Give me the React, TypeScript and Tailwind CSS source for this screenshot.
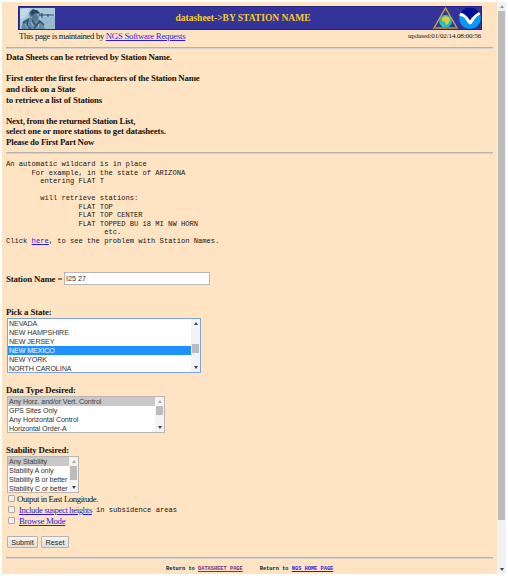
import React from "react";

const SERIF = "font-['Liberation_Serif',serif]";
const SANS = "font-['Liberation_Sans',sans-serif]";
const MONO = "font-['Liberation_Mono',monospace]";
const LINK = "text-[#2a1be8] underline";

function Arrow({ up, color }: { up?: boolean; color: string }) {
  return (
    <svg viewBox="0 0 4 3" className="h-[3px] w-[4px]">
      <path d={up ? "M0 3L2 0L4 3Z" : "M0 0L2 3L4 0Z"} fill={color} />
    </svg>
  );
}

type ListProps = { items: string[]; selected: number; box: string; highlight: string; thumb: string; atTop?: boolean };

function ListBox({ items, selected, box, highlight, thumb, atTop }: ListProps) {
  return (
    <div className={`ml-px flex overflow-hidden border bg-white ${SANS} ${box}`}>
      <div className="min-w-0 flex-1 overflow-hidden">
        {items.map((item, i) => (
          <div
            key={item}
            className={`h-[9px] whitespace-pre pl-px text-[7.15px] leading-[10px] tracking-[-0.1px] ${i === selected ? highlight : "text-[#333]"}`}
          >
            {item}
          </div>
        ))}
      </div>
      <div className="flex w-[9px] shrink-0 flex-col items-center bg-[#f3f3f3]">
        <div className="flex h-[8px] shrink-0 items-center"><Arrow up color={atTop ? "#aaa" : "#444"} /></div>
        <div className={`w-[7px] shrink-0 bg-[#bcbcbc] ${thumb}`} />
        <div className="mt-auto flex h-[9px] shrink-0 items-center"><Arrow color="#444" /></div>
      </div>
    </div>
  );
}

function Portrait() {
  return (
    <svg viewBox="0 0 35 21" className="ml-px h-[21px] w-[35px]">
      <rect width="35" height="21" fill="#a9c9dc" />
      <path d="M0 2L5 0H10L7 7L3 11L0 10Z" fill="#bfdae8" />
      <path d="M21 10L35 8V21H23Z" fill="#96b9d0" />
      <path d="M1 21L3 13L8 10L12 9L19 11L23 16L25 21Z" fill="#6288a4" />
      <path d="M9 5L12 2L17 2L20 5L19 10L15 13L10 11Z" fill="#557994" />
      <path d="M10 4L13 1L18 3L20 6L15 5L12 8Z" fill="#244964" />
      <path d="M16 6L22 5V8L18 9Z" fill="#7da0b7" />
      <path d="M19 7H34M22 5V10M28 6V9" stroke="#2a4e6b" strokeWidth="1.1" />
      <path d="M3 15L8 12L7 18L11 21M12 12L16 18L20 13L24 17M16 18L14 21" fill="none" stroke="#2b4d69" strokeWidth="1.3" />
      <path d="M5 16L8 20M11 14L13 18M19 16L18 20M9 8L12 10" stroke="#9abace" strokeWidth="1" />
    </svg>
  );
}

function NgsLogo() {
  return (
    <svg viewBox="0 0 25 22" className="h-[22px] w-[25px]">
      <circle cx="12.6" cy="14.2" r="6.4" fill="#20b9c0" />
      <path d="M9 11L12 9L16 10L17 13L15 17L13 18L12 15L9 14Z" fill="#e5c934" />
      <path d="M8 16L11 18L10 20" fill="none" stroke="#6bc978" />
      <path d="M12.5 1L1 21H24Z" fill="none" stroke="#d2b13d" strokeWidth="1.3" />
      <path d="M1 21H24" stroke="#8b7359" strokeWidth="1.3" />
    </svg>
  );
}

function NoaaLogo() {
  return (
    <svg viewBox="0 0 22 22" className="ml-px h-[22px] w-[22px]">
      <defs><clipPath id="seal"><circle cx="11" cy="11" r="10.8" /></clipPath></defs>
      <g clipPath="url(#seal)">
        <rect width="22" height="22" fill="#0799f5" />
        <path d="M0 0H22V5L17 8L11 14L5 9L0 6Z" fill="#080e91" />
        <path d="M0 5L5 7Q8 9 11 13.5Q14 8 22 4V7Q17 9 14.5 14Q12.5 17.5 11 17.5Q9 17 7 13Q5 9 0 9Z" fill="white" />
      </g>
    </svg>
  );
}

function Check() {
  return <span className="ml-[2px] mb-[2px] h-[7px] w-[7px] shrink-0 rounded-[1px] border border-[#b0aaa4] bg-[#f0efed]" />;
}

function Rule() {
  return <div className="h-[2px] w-[487px] border-t border-[#b4b0ac] bg-[#d8d2cc]" />;
}

const INTRO = [
  { text: "Data Sheets can be retrieved by Station Name.", tracking: "tracking-[-0.18px]" },
  { text: "", tracking: "" },
  { text: "First enter the first few characters of the Station Name", tracking: "tracking-[-0.21px]" },
  { text: "and click on a State", tracking: "tracking-[-0.2px]" },
  { text: "to retrieve a list of Stations", tracking: "tracking-[-0.16px]" },
  { text: "", tracking: "" },
  { text: "Next, from the returned Station List,", tracking: "tracking-[-0.23px]" },
  { text: "select one or more stations to get datasheets.", tracking: "tracking-[-0.12px]" },
  { text: "Please do First Part Now", tracking: "tracking-[-0.22px]" },
];

const WILDCARD = `An automatic wildcard is in place
      For example, in the state of ARIZONA
        entering FLAT T

        will retrieve stations:
                 FLAT TOP
                 FLAT TOP CENTER
                 FLAT TOPPED BU 18 MI NW HORN
                       etc.
`;

export default function App() {
  const label = "text-[8.8px] font-bold leading-[10px] tracking-[-0.14px] whitespace-pre";
  const option = "flex h-[11px] shrink-0 items-center whitespace-nowrap text-[8.75px] leading-[11px]";
  const button = `h-[12px] rounded-[1px] border border-[#b5b2af] bg-gradient-to-b from-[#f5f5f5] to-[#dedede] text-center text-[7.2px] leading-[11px] text-[#222] ${SANS}`;
  return (
    <div className={`h-[576px] w-[508px] overflow-hidden bg-white pl-[2px] pt-[2px] text-[#171310] ${SERIF}`}>
      <div className="flex h-[572px] w-[504px]">
        <main className="flex w-[495px] flex-col overflow-hidden bg-[#ffe4c4] pl-[4px] pt-[4px]">
          <header className="ml-[12px] flex h-[24px] w-[464px] shrink-0 items-center border border-[#25257f] bg-[#333399]">
            <Portrait />
            <div className="flex-1 whitespace-nowrap pl-[14px] text-center text-[9.5px] font-bold leading-[22px] text-[#f4cf27]">
              <span className="pr-[16px]">datasheet-&gt;BY STATION NAME</span>
            </div>
            <NgsLogo />
            <NoaaLogo />
          </header>
          <div className="ml-[13px] flex h-[17px] w-[462px] shrink-0 justify-between whitespace-nowrap pt-px">
            <span className="text-[8.75px] leading-[10px] tracking-[-0.36px]">This page is maintained by <span className={`tracking-[-0.26px] ${LINK}`}>NGS Software Requests</span></span>
            <span className="text-[7.1px] leading-[10px] tracking-[-0.15px]">updated:01/02/14.08:00:56</span>
          </div>
          <div className="h-[5px] shrink-0"><Rule /></div>
          <div className="h-[100px] shrink-0 whitespace-pre text-[8.8px] font-bold leading-[10.65px]">
            {INTRO.map((line, i) => (
              <div key={i} className={`h-[10.65px] ${line.tracking}`}>{line.text}</div>
            ))}
          </div>
          <div className="h-[8px] shrink-0"><Rule /></div>
          <div className={`h-[112px] shrink-0 whitespace-pre text-[7.12px] leading-[8.55px] ${MONO}`}>
            {WILDCARD}Click <span className={LINK}>here</span>, to see the problem with Station Names.
          </div>
          <div className="flex h-[35px] shrink-0 items-start">
            <div className={`w-[58px] pt-[2px] ${label}`}>Station Name =</div>
            <div className={`h-[13px] w-[146px] border border-[#b9b5b2] bg-white pl-px text-[7.2px] leading-[12px] text-[#333] ${SANS}`}>I25 27</div>
          </div>
          <div className={`h-[11px] shrink-0 ${label}`}>Pick a State:</div>
          <ListBox
            items={["NEVADA", "NEW HAMPSHIRE", "NEW JERSEY", "NEW MEXICO", "NEW YORK", "NORTH CAROLINA"]}
            selected={3}
            box="h-[55px] w-[194px] shrink-0 border-[#7da4dc]"
            highlight="bg-[#1e90ff] text-white"
            thumb="mt-[17px] h-[9px]"
          />
          <div className={`mt-[12px] h-[11px] shrink-0 ${label}`}>Data Type Desired:</div>
          <ListBox
            items={["Any Horz. and/or Vert. Control", "GPS Sites Only", "Any Horizontal Control", "Horizontal Order-A"]}
            selected={0}
            box="h-[37px] w-[158px] shrink-0 border-[#b9b5b2]"
            highlight="bg-[#c8c8c8] text-[#444]"
            thumb="mt-px h-[9px]"
            atTop
          />
          <div className={`mt-[12px] h-[11px] shrink-0 ${label}`}>Stability Desired:</div>
          <ListBox
            items={["Any Stability", "Stability A only", "Stability B or better", "Stability C or better"]}
            selected={0}
            box="h-[37px] w-[72px] shrink-0 border-[#b9b5b2]"
            highlight="bg-[#c8c8c8] text-[#444]"
            thumb="mt-px h-[14px]"
            atTop
          />
          <div className={`mt-px ${option}`}>
            <Check /><span className="ml-[2px] tracking-[-0.39px]">Output in East Longitude.</span>
          </div>
          <div className={option}>
            <Check /><span className={`ml-[4px] tracking-[-0.38px] ${LINK}`}>Include suspect heights</span>
            <span className={`ml-[4px] text-[7.12px] ${MONO}`}>in subsidence areas</span>
          </div>
          <div className={option}>
            <Check /><span className={`ml-[4px] tracking-[-0.28px] ${LINK}`}>Browse Mode</span>
          </div>
          <div className="ml-px mt-[9px] flex h-[21px] shrink-0 gap-[3px]">
            <div className={`w-[31px] ${button}`}>Submit</div>
            <div className={`w-[28px] ${button}`}>Reset</div>
          </div>
          <div className="h-[9px] shrink-0"><Rule /></div>
          <div className={`flex h-[7px] shrink-0 gap-[17px] whitespace-nowrap pl-[160px] text-[5.33px] font-bold leading-[7px] ${MONO}`}>
            <span>Return to <span className="text-[#703080] underline">DATASHEET PAGE</span></span>
            <span>Return to <span className={LINK}>NGS HOME PAGE</span></span>
          </div>
        </main>
        <aside className="flex w-[9px] flex-col items-center bg-[#f1f1f1]">
          <div className="flex h-[9px] items-center"><Arrow up color="#999" /></div>
          <div className="h-[509px] w-[7px] bg-[#bcbcbc]" />
          <div className="mt-auto flex h-[9px] items-center"><Arrow color="#444" /></div>
        </aside>
      </div>
    </div>
  );
}
